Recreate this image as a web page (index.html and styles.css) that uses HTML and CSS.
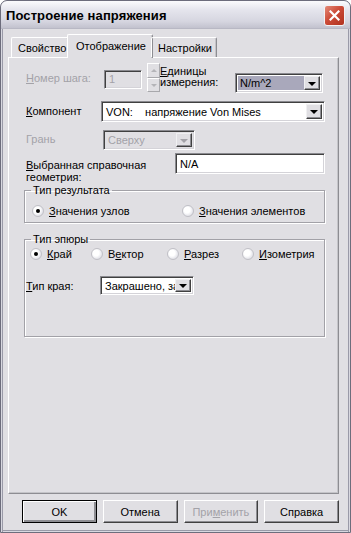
FILE: index.html
```html
<!DOCTYPE html>
<html lang="ru">
<head>
  <meta charset="UTF-8">
  <title>Построение напряжения</title>
  <link rel="stylesheet" href="styles.css">
</head>
<body>
  <div class="window">
    <div class="titlebar">
      <span class="title">Построение напряжения</span>
      <span class="close">
        <svg width="11" height="11" viewBox="0 0 11 11"><path d="M1.5 1.5 L9.5 9.5 M9.5 1.5 L1.5 9.5" stroke="#fff" stroke-width="2.2" stroke-linecap="square"/></svg>
      </span>
    </div>
    <div class="client">
      <div class="tabs">
        <div class="tab">Свойство</div>
        <div class="tab active">Отображение</div>
        <div class="tab">Настройки</div>
      </div>
      <div class="panel">
        <div class="row row-step">
          <span class="lbl lbl-step disabled"><u>Н</u>омер шага:</span>
          <span class="edit edit-step disabled">1</span>
          <span class="spin"><span class="spin-up"></span><span class="spin-down"></span></span>
          <span class="lbl lbl-units"><u>Е</u>диницы<br>измерения:</span>
          <span class="combo combo-units"><span class="combo-text selected">N/m^2</span><span class="drop"><i class="arrow"></i></span></span>
        </div>
        <div class="row row-comp">
          <span class="lbl lbl-comp"><u>К</u>омпонент</span>
          <span class="combo combo-comp"><span class="combo-text">VON:&nbsp;&nbsp;&nbsp;&nbsp;напряжение Von Mises</span><span class="drop"><i class="arrow"></i></span></span>
        </div>
        <div class="row row-face">
          <span class="lbl lbl-face disabled">Грань</span>
          <span class="combo combo-face disabled"><span class="combo-text">Сверху</span><span class="drop"><i class="arrow"></i></span></span>
        </div>
        <div class="row row-geom">
          <span class="lbl lbl-geom"><u>В</u>ыбранная справочная<br>геометрия:</span>
          <span class="edit edit-geom">N/A</span>
        </div>

        <fieldset class="group group-result">
          <legend>Тип результата</legend>
          <div class="radios">
            <label class="radio radio-nodes"><span class="dot checked"></span><span><u>З</u>начения узлов</span></label>
            <label class="radio"><span class="dot"></span><span><u>З</u>начения элементов</span></label>
          </div>
        </fieldset>

        <fieldset class="group group-plot">
          <legend>Тип эпюры</legend>
          <div class="radios radios-plot">
            <label class="radio r-edge"><span class="dot checked"></span><span><u>К</u>рай</span></label>
            <label class="radio r-vector"><span class="dot"></span><span>В<u>е</u>ктор</span></label>
            <label class="radio r-cut"><span class="dot"></span><span><u>Р</u>азрез</span></label>
            <label class="radio"><span class="dot"></span><span><u>И</u>зометрия</span></label>
          </div>
          <div class="row row-edge">
            <span class="lbl lbl-edge"><u>Т</u>ип края:</span>
            <span class="combo combo-edge"><span class="combo-text">Закрашено, за</span><span class="drop"><i class="arrow"></i></span></span>
          </div>
        </fieldset>
      </div>
      <div class="buttons">
        <button class="btn default">OK</button>
        <button class="btn">Отмена</button>
        <button class="btn disabled">При<u>м</u>енить</button>
        <button class="btn">Справка</button>
      </div>
    </div>
  </div>
</body>
</html>
```

FILE: styles.css
```css
body {
  margin: 0;
  background-color: #ffffff;
  font-family: "Liberation Sans", Arial, sans-serif;
  font-size: 11px;
  color: #000;
}
.window {
  width: 351px;
  height: 533px;
  box-sizing: border-box;
  border: 1px solid #6d6d7c;
  border-radius: 7px 7px 0 0;
  background-color: #e0dfe3;
  padding: 0 3px;
  box-shadow: inset 1px 0 #d8d8e0, inset 2px 0 #9a9aa8, inset -1px 0 #d8d8e0, inset -2px 0 #9a9aa8,
    inset 0 -1px #d8d8e0, inset 0 -2px #9a9aa8;
  overflow: hidden;
}
.titlebar {
  height: 28px;
  margin: 0 -3px;
  display: flex;
  align-items: center;
  justify-content: space-between;
  padding: 0 5px 0 5px;
  background: linear-gradient(#fbfbfd, #e4e4ec 35%, #d6d6e0 75%, #c2c2ce);
  border-radius: 6px 6px 0 0;
  border-bottom: 1px solid #b8b8c4;
  box-sizing: border-box;
}
.title {
  font-weight: bold;
  font-size: 13px;
  letter-spacing: 0.1px;
  margin-top: 2px;
}
.close {
  width: 21px;
  height: 21px;
  box-sizing: border-box;
  border: 1px solid #f2f2f4;
  border-radius: 3px;
  background: linear-gradient(135deg, #e48a78, #cc4b38 45%, #b0321f);
  display: flex;
  align-items: center;
  justify-content: center;
  margin-top: 2px;
}
.client {
  padding: 0 8px 0 4px;
}
.tabs {
  display: flex;
  align-items: flex-start;
  height: 23px;
  margin-top: 5px;
  padding-left: 3px;
  position: relative;
  z-index: 1;
}
.tab {
  height: 20px;
  margin-top: 3px;
  box-sizing: border-box;
  padding: 3px 6px 0 6px;
  border: 1px solid #fff;
  border-right-color: #8d8d92;
  border-bottom: none;
  border-radius: 2px 2px 0 0;
  box-shadow: inset -1px 0 #c4c4c8;
  line-height: 14px;
}
.tab:first-child {
  width: 58px;
}
.tab.active {
  height: 24px;
  margin: 0 -2px;
  width: 86px;
  padding: 4px 0 0 8px;
  background-color: #e0dfe3;
}
.tab:last-child {
  width: 66px;
}
.panel {
  height: 437px;
  box-sizing: border-box;
  border: 1px solid #fff;
  border-right-color: #8d8d92;
  border-bottom-color: #8d8d92;
  box-shadow: inset -1px -1px #c4c4c8;
  padding: 6px 0 0 15px;
}
.row {
  display: flex;
  align-items: flex-start;
  padding-left: 2px;
}
.lbl {
  line-height: 13px;
  white-space: nowrap;
}
.disabled {
  color: #a3a2a8;
}
.row-step { height: 29px; }
.lbl-step { width: 78px; margin-top: 8px; }
.edit {
  box-sizing: border-box;
  border: 1px solid;
  border-color: #8a8a8f #fff #fff #8a8a8f;
  box-shadow: inset 1px 1px #404040, inset -1px -1px #d4d3d8;
  background-color: #fff;
  padding: 3px 0 0 4px;
  line-height: 13px;
}
.edit-step {
  width: 38px;
  height: 19px;
  margin-top: 6px;
  background-color: #e0dfe3;
  padding-top: 2px;
}
.spin {
  width: 13px;
  height: 29px;
  margin: -1px 0 0 5px;
  display: flex;
  flex-direction: column;
}
.spin-up, .spin-down {
  flex: 1;
  box-sizing: border-box;
  border: 1px solid;
  border-color: #fff #a8a8ac #a8a8ac #fff;
  position: relative;
}
.spin-up::after, .spin-down::after {
  content: "";
  position: absolute;
  left: 3px;
  top: 5px;
  border: 3px solid transparent;
  border-bottom-color: #b4b4b8;
  border-top: none;
}
.spin-down::after {
  border-bottom: none;
  border-top: 3px solid #b4b4b8;
}
.lbl-units {
  width: 75px;
  line-height: 11px;
  margin-top: 2px;
}
.combo {
  display: flex;
  box-sizing: border-box;
  border: 1px solid;
  border-color: #8a8a8f #fff #fff #8a8a8f;
  box-shadow: inset 1px 1px #404040, inset -1px -1px #d4d3d8;
  background-color: #fff;
  padding: 2px;
}
.combo-text {
  flex: 1;
  overflow: hidden;
  white-space: nowrap;
  line-height: 15px;
  padding-left: 2px;
}
.combo-text.selected {
  background-color: #a9a8bb;
}
.drop {
  width: 16px;
  box-sizing: border-box;
  border: 1px solid;
  border-color: #f0f0f2 #404040 #404040 #f0f0f2;
  box-shadow: inset -1px -1px #8d8d92;
  background-color: #e0dfe3;
  display: flex;
  align-items: center;
  justify-content: center;
}
.arrow {
  display: block;
  border: 4px solid transparent;
  border-top: 4px solid #000;
  border-bottom: none;
  margin-top: 1px;
}
.combo.disabled {
  background-color: #e0dfe3;
}
.combo.disabled .arrow {
  border-top-color: #a3a2a8;
}
.combo-units {
  width: 88px;
  height: 20px;
  margin-top: 9px;
}
.row-comp { height: 32px; }
.lbl-comp { width: 75px; margin-top: 12px; }
.combo-comp {
  width: 224px;
  height: 21px;
  margin-top: 8px;
}
.combo-comp .combo-text { line-height: 16px; }
.row-face { height: 28px; }
.lbl-face { width: 77px; margin-top: 8px; }
.combo-face {
  width: 92px;
  height: 20px;
  margin-top: 5px;
}
.row-geom { height: 30px; }
.lbl-geom { width: 149px; line-height: 12px; margin-top: 6px; }
.edit-geom {
  width: 150px;
  height: 21px;
  padding-top: 4px;
}
.group {
  width: 301px;
  box-sizing: border-box;
  margin: 1px 0 0 0;
  padding: 0;
  border: 1px solid #a2a1a7;
  box-shadow: inset 1px 1px #fff, 1px 1px #fff;
}
.group legend {
  margin-left: 6px;
  padding: 0 2px;
  line-height: 13px;
}
.radios {
  display: flex;
  padding: 6px 0 3px 7px;
}
.radio {
  display: flex;
  align-items: center;
  gap: 5px;
  line-height: 16px;
  white-space: nowrap;
}
.radio-nodes { width: 150px; }
.dot {
  width: 12px;
  height: 12px;
  box-sizing: border-box;
  border-radius: 50%;
  border: 1px solid #c0c0c6;
  background: radial-gradient(circle at 40% 40%, #ffffff 35%, #e4e4ea 70%, #c8c8d0);
  position: relative;
}
.dot.checked::after {
  content: "";
  position: absolute;
  left: 3px;
  top: 3px;
  width: 4px;
  height: 4px;
  border-radius: 50%;
  background-color: #000;
}
.group-plot {
  margin-top: 10px;
  height: 104px;
}
.radios-plot {
  padding: 0 0 0 5px;
}
.r-edge { width: 61px; }
.r-vector { width: 76px; }
.r-cut { width: 75px; }
.row-edge {
  margin-top: 14px;
  padding-left: 1px;
}
.lbl-edge { width: 74px; margin-top: 4px; }
.combo-edge {
  width: 94px;
  height: 19px;
}
.combo-edge .combo-text { line-height: 14px; }
.buttons {
  display: flex;
  gap: 6px;
  margin-top: 6px;
  padding-left: 14px;
}
.btn {
  width: 75px;
  height: 23px;
  box-sizing: border-box;
  font-family: "Liberation Sans", Arial, sans-serif;
  font-size: 11px;
  background-color: #e0dfe3;
  border: 1px solid;
  border-color: #fff #404040 #404040 #fff;
  box-shadow: inset -1px -1px #8d8d92;
  padding: 0;
  color: #000;
}
.btn.default {
  border: 1px solid #000;
  box-shadow: inset 1px 1px #fff, inset -2px -2px #8d8d92;
}
.btn.disabled {
  color: #a3a2a8;
}
```
